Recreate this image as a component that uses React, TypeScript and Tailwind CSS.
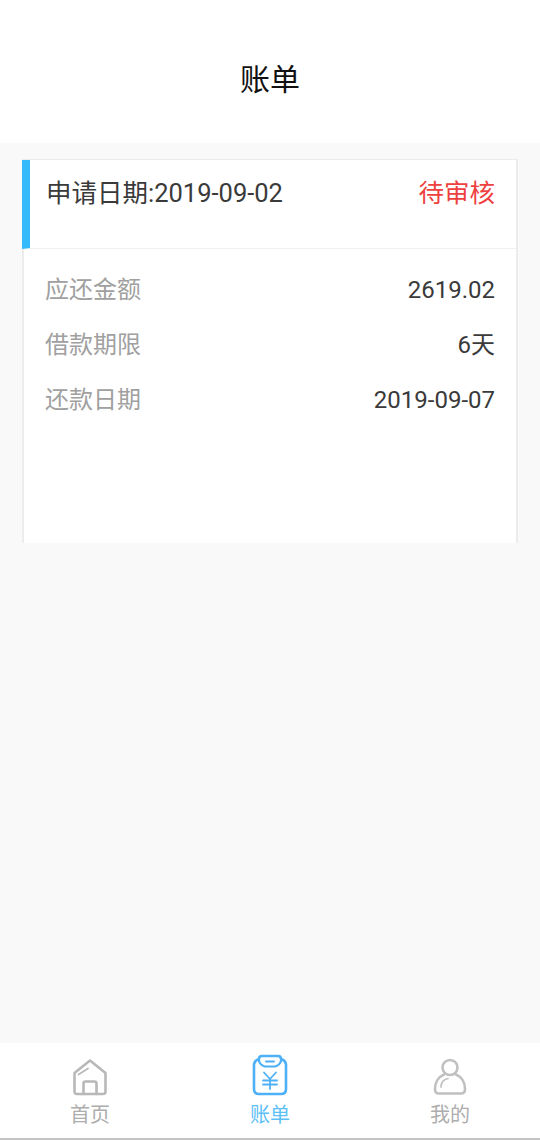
const FONT = "font-['Roboto','Noto_Sans_CJK_SC',sans-serif]";

function HomeIcon() {
  return (
    <svg width="36" height="38" viewBox="0 0 36 38" fill="none" stroke="#b8b8b8" strokeWidth="2.6" strokeLinejoin="round" strokeLinecap="round">
      <path d="M2.5 15 L18 2.5 L33.5 15 V33.5 Q33.5 36 31 36 H5 Q2.5 36 2.5 33.5 Z" />
      <path d="M11.5 36 V25.5 Q11.5 23.5 13.5 23.5 H22.5 Q24.5 23.5 24.5 25.5 V36" />
      <path d="M6.5 16.5 L16 10.5" strokeWidth="1.7" />
    </svg>
  );
}

function BillIcon() {
  return (
    <svg width="36" height="42" viewBox="0 0 36 42" fill="none" stroke="#4eb0f7" strokeWidth="2.6" strokeLinejoin="round" strokeLinecap="round">
      <path d="M7 5 Q7 2 10 2 H26 Q29 2 29 5 Q33 6 34 10 V35 Q34 40 29 40 H7 Q2 40 2 35 V10 Q3 6 7 5 Z" />
      <path d="M7 5 V7 Q8 11 13 12.5 H23 Q28 11 29 7 V5" strokeWidth="2.2" />
      <path d="M14 7.5 H22" strokeWidth="2" />
      <path d="M12 18.5 L18 25 L24 18.5 M18 25 V35 M11 26.5 H25 M11 30.5 H25" strokeWidth="1.8" />
    </svg>
  );
}

function UserIcon() {
  return (
    <svg width="34" height="38" viewBox="0 0 34 38" fill="none" stroke="#c0c0c0" strokeWidth="2.6" strokeLinejoin="round" strokeLinecap="round">
      <circle cx="17" cy="9.5" r="7.5" />
      <path d="M11 16.5 C5 19 2 25 2 31 Q2 35.5 6 35.5 H28 Q32 35.5 32 31 C32 25 29 19 23 16.5" />
      <path d="M8 29 C8 24.5 11 21.5 15 20.5" strokeWidth="1.7" />
    </svg>
  );
}

function Row({ label, value }: { label: string; value: string }) {
  return (
    <div className="flex h-[55px] items-center justify-between">
      <span className="text-[24px] text-[#a0a0a0]">{label}</span>
      <span className="text-[24px] text-[#3a3a3a]">{value}</span>
    </div>
  );
}

function Tab({ icon, label, active }: { icon: React.ReactNode; label: string; active?: boolean }) {
  return (
    <div className="flex flex-1 flex-col items-center">
      <div className="flex h-[43px] items-end justify-center">{icon}</div>
      <span className={`mt-[6px] text-[20px] leading-[26px] ${active ? "text-[#5cc0f7]" : "text-[#adadad]"}`}>{label}</span>
    </div>
  );
}

export default function App() {
  return (
    <div className={`${FONT} flex h-[1140px] w-[540px] flex-col overflow-hidden bg-[#f9f9f9]`}>
      <header className="flex h-[143px] items-center justify-center bg-white pt-[16px]">
        <h1 className="text-[30px] font-normal text-[#111111]">账单</h1>
      </header>

      <main className="flex-1 px-[22px] pt-[16px]">
        <div className="h-[384px] border-x-2 border-t border-[#ececec] bg-white">
          <div className="-ml-[2px] flex h-[89px] justify-between border-b border-[#f0f0f0] border-l-[8px] border-l-[#35bbfb] pl-[16px] pr-[21px] pt-[14px]">
            <span className="text-[25.5px] leading-[38px] text-[#3a3a3a]">申请日期:2019-09-02</span>
            <span className="text-[25.5px] leading-[38px] text-[#ee4040]">待审核</span>
          </div>
          <div className="px-[21px] pt-[13px]">
            <Row label="应还金额" value="2619.02" />
            <Row label="借款期限" value="6天" />
            <Row label="还款日期" value="2019-09-07" />
          </div>
        </div>
      </main>

      <nav className="flex h-[97px] border-b-2 border-[#c4c4c4] bg-white pt-[10px]">
        <Tab icon={<HomeIcon />} label="首页" />
        <Tab icon={<BillIcon />} label="账单" active />
        <Tab icon={<UserIcon />} label="我的" />
      </nav>
    </div>
  );
}
